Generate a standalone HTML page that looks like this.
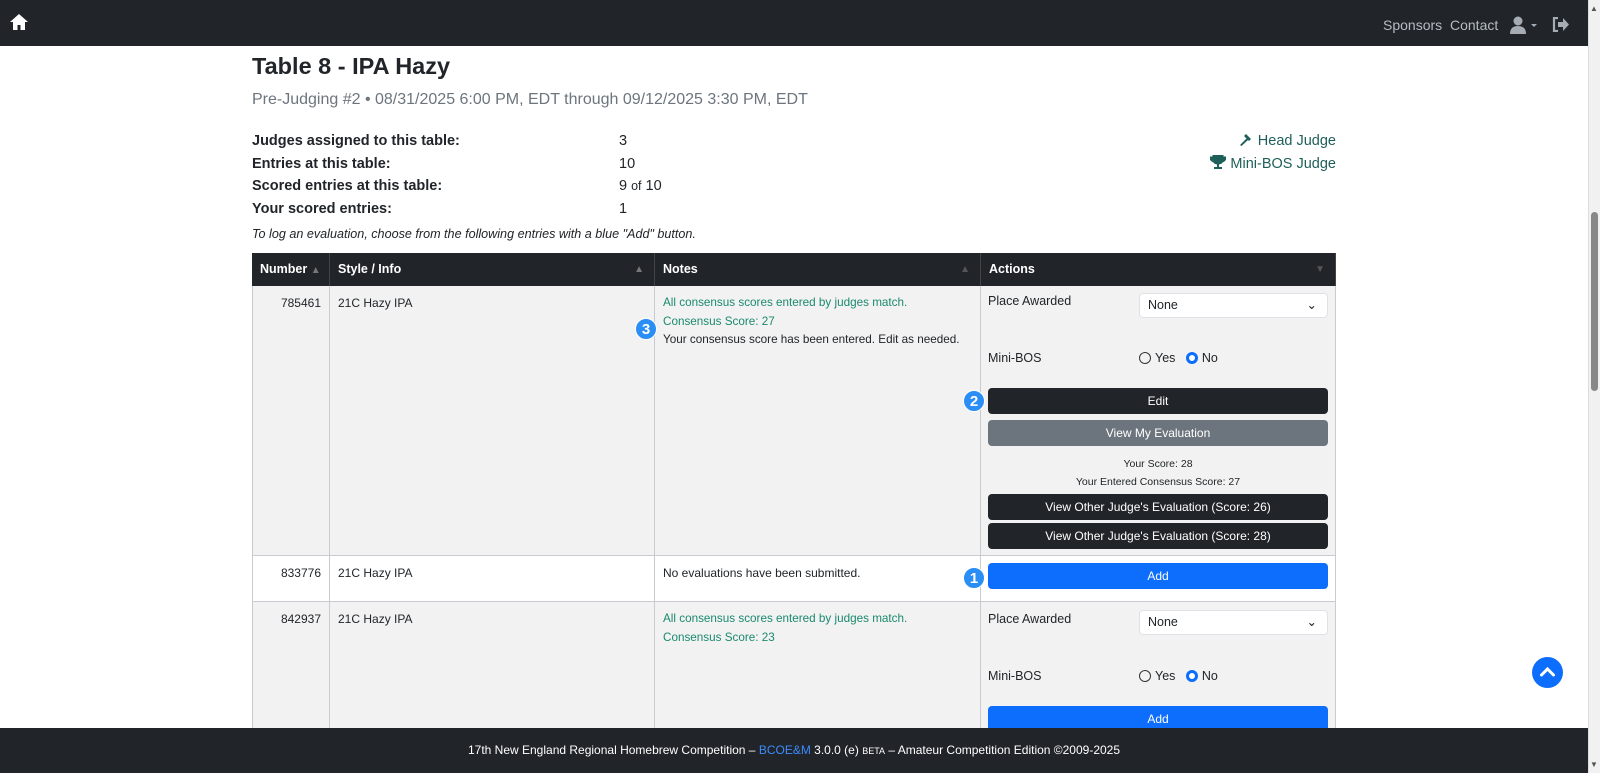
<!DOCTYPE html>
<html><head><meta charset="utf-8"><style>
*{box-sizing:border-box;margin:0;padding:0}
body{width:1600px;height:773px;overflow:hidden;background:#fff;font-family:"Liberation Sans",Arial,sans-serif;color:#212529;position:relative}
.a{position:absolute;white-space:nowrap}
.nav{position:absolute;left:0;top:0;width:1588px;height:46px;background:#212529}
.foot{position:absolute;left:0;top:728px;width:1588px;height:45px;background:#212529;color:#fff;font-size:12px;text-align:center;line-height:45px}
.sb{position:absolute;left:1588px;top:0;width:12px;height:773px;background:#f1f1f1;border-left:1px solid #ddd}
.th{position:absolute;top:253px;height:33px;background:#212529;color:#fff;font-weight:bold;font-size:12.5px;line-height:33px;padding-left:8px;border-right:1px solid #444}
.cell{position:absolute;font-size:12px;line-height:18px;border-right:1px solid #c8ccd0;border-bottom:1px solid #c8ccd0}
.btn{position:absolute;left:988px;width:340px;height:26px;border-radius:4px;color:#fff;font-size:12px;text-align:center;line-height:26px}
.dk{background:#212529}.gr{background:#6c757d}.bl{background:#0d6efd}
.sel{position:absolute;left:1139px;width:189px;height:25px;background:#fff;border:1px solid #dee2e6;border-radius:4px;font-size:12.5px;line-height:23px;padding-left:8px}
.badge{position:absolute;width:22px;height:22px;border-radius:50%;background:#2b8ef5;color:#fff;font-weight:bold;font-size:15px;text-align:center;line-height:22px;border:1px solid #fff}
.rad{display:inline-block;width:12px;height:12px;border-radius:50%;border:1px solid #333;vertical-align:-2px;margin-right:4px}
.rad.on{border:3.5px solid #0d6efd;background:#fff}
.green{color:#1a8a6e}
</style></head><body>
<div class="nav">
 <svg class="a" style="left:9px;top:13px" width="20" height="18" viewBox="0 0 20 18"><path d="M10 1 L1 9 H4 V17 H8.5 V12 H11.5 V17 H16 V9 H19 Z" fill="#fff"/></svg>
 <div class="a" style="left:1383px;top:17px;font-size:14px;color:#b5bcc3">Sponsors</div>
 <div class="a" style="left:1450px;top:17px;font-size:14px;color:#b5bcc3">Contact</div>
 <svg class="a" style="left:1510px;top:16px" width="28" height="18" viewBox="0 0 28 18"><circle cx="8" cy="5" r="4.5" fill="#a5acb3"/><path d="M0 18 Q0 10 8 10 Q16 10 16 18Z" fill="#a5acb3"/><path d="M21 8 h6 l-3 3z" fill="#a5acb3"/></svg>
 <svg class="a" style="left:1552px;top:17px" width="18" height="15" viewBox="0 0 18 15"><path d="M6 1 H2 V14 H6" stroke="#a5acb3" stroke-width="2.2" fill="none"/><path d="M6 5 H11 V1 L17 7.5 L11 14 V10 H6Z" fill="#a5acb3"/></svg>
</div>
<div class="a" style="left:252px;top:53px;font-size:23.5px;font-weight:bold">Table 8 - IPA Hazy</div>
<div class="a" style="left:252px;top:91px;font-size:16px;color:#6c757d">Pre-Judging #2 • 08/31/2025 6:00 PM, EDT through 09/12/2025 3:30 PM, EDT</div>
<div class="a" style="left:252px;top:130px;font-size:14.5px;font-weight:bold;line-height:22.5px">Judges assigned to this table:<br>Entries at this table:<br>Scored entries at this table:<br>Your scored entries:</div>
<div class="a" style="left:619px;top:130px;font-size:14.5px;line-height:22.5px">3<br>10<br>9 <span style="font-size:12.5px">of</span> 10<br>1</div>
<div class="a" style="right:264px;top:130px;font-size:14.5px;line-height:22.5px;color:#1f5f5a;text-align:right">
<svg width="15" height="13" viewBox="0 0 15 13" style="vertical-align:-1px"><path d="M7 1 L12 6 L10 8 L5 3Z M7.5 5.5 L1 12 L2.5 13 L9 7" fill="#1f5f5a"/></svg> Head Judge<br>
<svg width="16" height="14" viewBox="0 0 16 14" style="vertical-align:-1px"><path d="M3 0 H13 V4 Q13 9 8 9 Q3 9 3 4Z M3 2 H0 Q0 6 4 7 M13 2 H16 Q16 6 12 7" fill="#1f5f5a" stroke="#1f5f5a" stroke-width="1"/><rect x="7" y="9" width="2" height="3" fill="#1f5f5a"/><rect x="4" y="12" width="8" height="2" fill="#1f5f5a"/></svg> Mini-BOS Judge</div>
<div class="a" style="left:252px;top:227px;font-size:12.6px;font-style:italic">To log an evaluation, choose from the following entries with a blue "Add" button.</div>

<div class="th" style="left:252px;width:78px">Number <span style="color:#777;font-size:10px">▲</span></div>
<div class="th" style="left:330px;width:325px">Style / Info<span style="position:absolute;right:10px;color:#777;font-size:10px">▲</span></div>
<div class="th" style="left:655px;width:326px">Notes<span style="position:absolute;right:10px;color:#555;font-size:10px">▲</span></div>
<div class="th" style="left:981px;width:355px">Actions<span style="position:absolute;right:10px;color:#555;font-size:10px">▼</span></div>

<div style="position:absolute;left:252px;top:286px;width:1084px;height:270px;background:#f2f2f2;border-left:1px solid #c8ccd0"></div>
<div style="position:absolute;left:252px;top:602px;width:1084px;height:130px;background:#f2f2f2;border-left:1px solid #c8ccd0"></div>
<div style="position:absolute;left:252px;top:556px;width:1084px;height:46px;border-left:1px solid #c8ccd0"></div>

<div class="cell" style="left:252px;top:286px;width:78px;height:270px;text-align:right;padding:8px 8px">785461</div>
<div class="cell" style="left:330px;top:286px;width:325px;height:270px;padding:8px">21C Hazy IPA</div>
<div class="cell" style="left:655px;top:286px;width:326px;height:270px;padding:8px 8px;line-height:18.5px;font-size:11.7px"><span class="green">All consensus scores entered by judges match.<br>Consensus Score: 27</span><br>Your consensus score has been entered. Edit as needed.</div>
<div class="cell" style="left:981px;top:286px;width:355px;height:270px"></div>

<div class="cell" style="left:252px;top:556px;width:78px;height:46px;text-align:right;padding:8px">833776</div>
<div class="cell" style="left:330px;top:556px;width:325px;height:46px;padding:8px">21C Hazy IPA</div>
<div class="cell" style="left:655px;top:556px;width:326px;height:46px;padding:8px">No evaluations have been submitted.</div>
<div class="cell" style="left:981px;top:556px;width:355px;height:46px"></div>

<div class="cell" style="left:252px;top:602px;width:78px;height:130px;text-align:right;padding:8px">842937</div>
<div class="cell" style="left:330px;top:602px;width:325px;height:130px;padding:8px">21C Hazy IPA</div>
<div class="cell green" style="left:655px;top:602px;width:326px;height:130px;padding:8px;line-height:18.5px;font-size:11.7px">All consensus scores entered by judges match.<br>Consensus Score: 23</div>
<div class="cell" style="left:981px;top:602px;width:355px;height:130px"></div>

<div class="a" style="left:988px;top:294px;font-size:12.5px">Place Awarded</div>
<div class="sel" style="top:293px">None<span style="position:absolute;right:10px;top:0">⌄</span></div>
<div class="a" style="left:988px;top:351px;font-size:12.5px">Mini-BOS</div>
<div class="a" style="left:1139px;top:351px;font-size:12.5px"><span class="rad"></span>Yes &nbsp; <span class="rad on"></span>No</div>
<div class="btn dk" style="top:388px">Edit</div>
<div class="btn gr" style="top:420px">View My Evaluation</div>
<div class="a" style="left:988px;width:340px;text-align:center;top:455px;font-size:10.5px;line-height:18px">Your Score: 28<br>Your Entered Consensus Score: 27</div>
<div class="btn dk" style="top:494px">View Other Judge's Evaluation (Score: 26)</div>
<div class="btn dk" style="top:523px">View Other Judge's Evaluation (Score: 28)</div>

<div class="btn bl" style="top:563px">Add</div>

<div class="a" style="left:988px;top:612px;font-size:12.5px">Place Awarded</div>
<div class="sel" style="top:610px">None<span style="position:absolute;right:10px;top:0">⌄</span></div>
<div class="a" style="left:988px;top:669px;font-size:12.5px">Mini-BOS</div>
<div class="a" style="left:1139px;top:669px;font-size:12.5px"><span class="rad"></span>Yes &nbsp; <span class="rad on"></span>No</div>
<div class="btn bl" style="top:706px">Add</div>

<div class="badge" style="left:635px;top:318px">3</div>
<div class="badge" style="left:963px;top:390px">2</div>
<div class="badge" style="left:963px;top:567px">1</div>

<div style="position:absolute;left:1532px;top:657px;width:31px;height:31px;border-radius:50%;background:#0d6efd"><svg width="31" height="31" viewBox="0 0 31 31"><path d="M9.5 18 L15.5 12 L21.5 18" stroke="#fff" stroke-width="3" fill="none" stroke-linecap="round"/></svg></div>

<div class="foot">17th New England Regional Homebrew Competition – <span style="color:#3d8bfd">BCOE&amp;M</span> 3.0.0 (e) <span style="font-size:9px">BETA</span> – Amateur Competition Edition ©2009-2025</div>
<div class="sb"><div style="position:absolute;left:2px;top:212px;width:7px;height:179px;background:#888;border-radius:4px"></div><div style="position:absolute;left:1px;top:4px;font-size:8px;color:#555">▲</div><div style="position:absolute;left:1px;top:760px;font-size:8px;color:#555">▼</div></div>
</body></html>
